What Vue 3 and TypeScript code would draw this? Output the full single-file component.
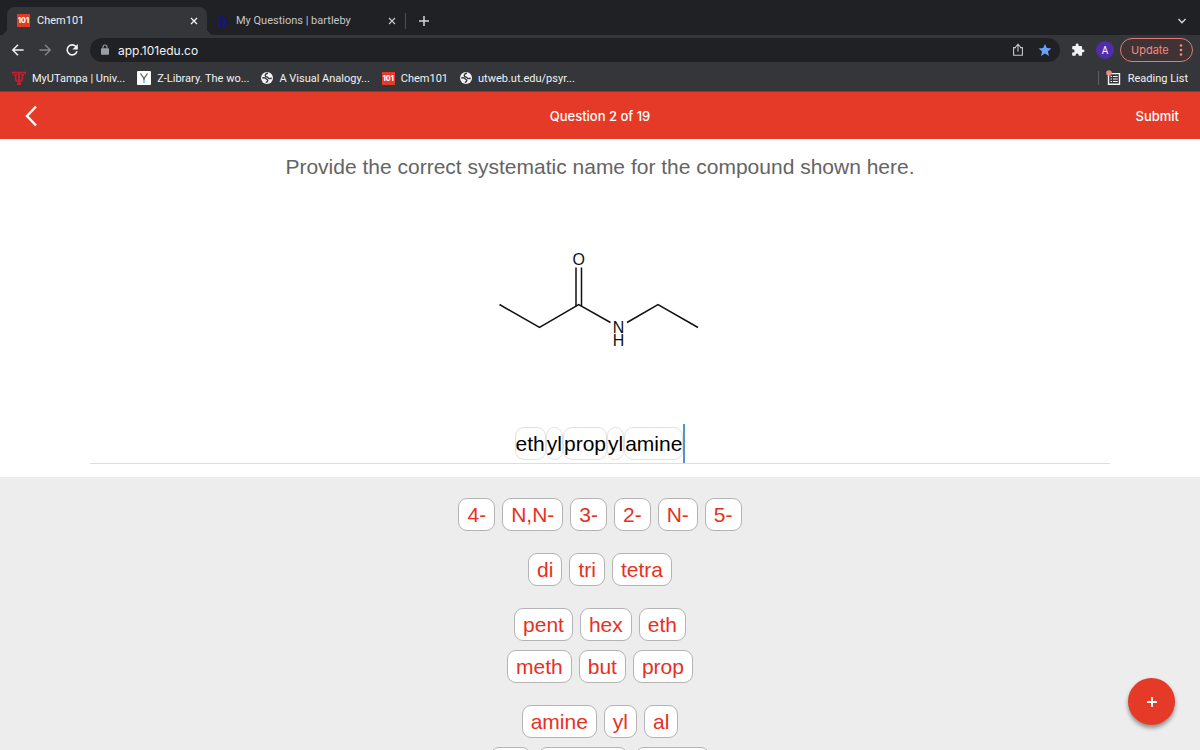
<script setup lang="ts">
import { ref } from 'vue'

interface Bookmark {
  label: string
  icon: 'ut' | 'y' | 'globe' | '101'
}

const bookmarks: Bookmark[] = [
  { label: 'MyUTampa | Univ...', icon: 'ut' },
  { label: 'Z-Library. The wo...', icon: 'y' },
  { label: 'A Visual Analogy...', icon: 'globe' },
  { label: 'Chem101', icon: '101' },
  { label: 'utweb.ut.edu/psyr...', icon: 'globe' },
]

const groups: string[][][] = [
  [['4-', 'N,N-', '3-', '2-', 'N-', '5-']],
  [['di', 'tri', 'tetra']],
  [
    ['pent', 'hex', 'eth'],
    ['meth', 'but', 'prop'],
  ],
  [
    ['amine', 'yl', 'al'],
    ['an', 'oic acid', 'amide'],
  ],
]

const address = ref('app.101edu.co')
const draft = ref('')
const answer = ref<string[]>(['eth', 'yl', 'prop', 'yl', 'amine'])

function add(part: string) {
  answer.value.push(part)
}
function removeLast() {
  if (!draft.value) answer.value.pop()
}
</script>

<template>
  <div class="window">
    <header class="browser">
      <div class="tabstrip">
        <div class="tab active">
          <span class="fav101">101</span>
          <span class="tabname">Chem101</span>
          <button class="icon close" aria-label="Close Chem101">
            <svg width="8" height="8" viewBox="0 0 8 8"><path d="M1 1l6 6M7 1l-6 6" stroke="#f1f3f4" stroke-width="1.3" /></svg>
          </button>
        </div>
        <div class="tab">
          <span class="favb">b</span>
          <span class="tabname">My Questions | bartleby</span>
          <button class="icon close" aria-label="Close My Questions">
            <svg width="8" height="8" viewBox="0 0 8 8"><path d="M1 1l6 6M7 1l-6 6" stroke="#c4c7cb" stroke-width="1.2" /></svg>
          </button>
        </div>
        <span class="tabsep"></span>
        <button class="icon newtab" aria-label="New tab">
          <svg width="12" height="12" viewBox="0 0 12 12"><path d="M6 1v10M1 6h10" stroke="#d5d7da" stroke-width="1.5" /></svg>
        </button>
        <button class="icon tabmenu" aria-label="Search tabs">
          <svg width="10" height="8" viewBox="0 0 10 8"><path d="M1.5 2L5 5.7 8.5 2" fill="none" stroke="#d5d7da" stroke-width="1.4" /></svg>
        </button>
      </div>

      <div class="toolbar">
        <div class="nav">
          <button class="icon" aria-label="Back">
            <svg width="14" height="14" viewBox="0 0 14 14"><path d="M12.6 7H2M7 1.8L1.8 7 7 12.2" fill="none" stroke="#f1f3f4" stroke-width="1.5" /></svg>
          </button>
          <button class="icon" aria-label="Forward">
            <svg width="14" height="14" viewBox="0 0 14 14"><path d="M1.4 7H12M7 1.8L12.2 7 7 12.2" fill="none" stroke="#85878b" stroke-width="1.4" /></svg>
          </button>
          <button class="icon" aria-label="Reload">
            <svg width="14" height="14" viewBox="0 0 14 14">
              <path d="M11.3 4A5 5 0 1 0 12 8.3" fill="none" stroke="#f1f3f4" stroke-width="1.6" />
              <path d="M12.8 1v5.4H7.4z" fill="#f1f3f4" />
            </svg>
          </button>
        </div>
        <div class="omnibox">
          <svg width="10" height="12" viewBox="0 0 10 12">
            <rect x="1" y="4.2" width="8" height="6.6" rx="0.8" fill="#9aa0a6" />
            <path d="M3 4.6V3a2 2 0 0 1 4 0v1.6" fill="none" stroke="#9aa0a6" stroke-width="1.1" />
          </svg>
          <input v-model="address" class="address" aria-label="Address" />
          <button class="icon" aria-label="Share">
            <svg width="12" height="14" viewBox="0 0 12 14"><path d="M4 4.6H1.6v7.6h8.8V4.6H8M6 8.800V1.600M3.600 3.800L6 1.400l2.400 2.400" fill="none" stroke="#c4c7cb" stroke-width="1.1" /></svg>
          </button>
          <button class="icon" aria-label="Bookmark">
            <svg width="14" height="14" viewBox="0 0 24 24"><path d="M12 1.5l3.1 7.2 7.9.7-6 5.2 1.8 7.7L12 18.200l-6.800 4.100L7 14.600 1 9.400l7.900-.7z" fill="#6aa0f8" /></svg>
          </button>
        </div>
        <button class="icon" aria-label="Extensions">
          <svg width="14" height="14" viewBox="0 0 24 24"><path d="M20.500 11H19V7a2 2 0 0 0-2-2h-4V3.500a2.500 2.500 0 0 0-5 0V5H4a2 2 0 0 0-2 2v3.800h1.500a2.700 2.700 0 0 1 0 5.400H2V20a2 2 0 0 0 2 2h3.800v-1.500a2.700 2.700 0 0 1 5.400 0V22H17a2 2 0 0 0 2-2v-4h1.500a2.500 2.500 0 0 0 0-5z" fill="#f1f3f4" /></svg>
        </button>
        <button class="avatar" aria-label="Profile">A</button>
        <button class="update">
          Update
          <svg width="4" height="14" viewBox="0 0 4 14" fill="#f08b82"><circle cx="2" cy="2.500" r="1.300" /><circle cx="2" cy="7" r="1.300" /><circle cx="2" cy="11.500" r="1.300" /></svg>
        </button>
      </div>

      <nav class="bookmarks" aria-label="Bookmarks">
        <a v-for="b in bookmarks" :key="b.label" href="#" class="bookmark">
          <span v-if="b.icon === '101'" class="fav101">101</span>
          <svg v-else-if="b.icon === 'ut'" width="14" height="14" viewBox="0 0 14 14" fill="none" stroke="#c5202f">
            <path d="M.5 3.600V1.500h13v2.100" stroke-width="1.400" />
            <path d="M7 1.500V12.500M5 12.800h4" stroke-width="2.200" />
            <path d="M3.600 3.500v4c0 2 1.200 3 3.400 3s3.400-1 3.400-3v-4M2 3.800h3M9 3.800h3" stroke-width="1.600" />
          </svg>
          <svg v-else-if="b.icon === 'y'" width="14" height="14" viewBox="0 0 14 14">
            <rect width="14" height="14" rx="1" fill="#fff" />
            <path d="M3.500 2.500L7 7.500l3.500-5" fill="none" stroke="#555" stroke-width="1.200" />
            <path d="M7 7.300V9" stroke="#555" stroke-width="1.300" /><path d="M7 9v3" stroke="#36a9e0" stroke-width="1.300" />
          </svg>
          <svg v-else width="12" height="12" viewBox="0 0 12 12">
            <circle cx="6" cy="6" r="6" fill="#f1f3f4" />
            <path d="M7 1.300C5 1.500 4 2.500 4.300 3.800S6.500 4.600 7 5.800 9 6.700 10.700 6.300M1.300 6c2-.4 3.500 0 4 1s1.700.5 1.500 1.700S5.500 10 5 10.600" fill="none" stroke="#35363a" stroke-width="1.400" />
          </svg>
          <span>{{ b.label }}</span>
        </a>
        <span class="marksep"></span>
        <button class="reading">
          <svg width="15" height="16" viewBox="0 0 15 16">
            <path d="M2.500 3.600h11v10.600h-11z" fill="none" stroke="#f1f3f4" stroke-width="1.400" />
            <path d="M4.500 6.500H6M4.500 9H6M4.500 11.500H6M7 6.500h4.700M7 9h4.700M7 11.500h4.700" stroke="#f1f3f4" stroke-width="1.200" />
            <circle cx="3" cy="3" r="2.800" fill="#f08b82" />
          </svg>
          Reading List
        </button>
      </nav>
    </header>

    <div class="appbar">
      <button class="icon back" aria-label="Previous">
        <svg width="12" height="22" viewBox="0 0 12 22"><path d="M11 1.500L2 11l9 9.500" fill="none" stroke="#fff" stroke-width="2.400" /></svg>
      </button>
      <span class="progress">Question 2 of 19</span>
      <button class="submit">Submit</button>
    </div>

    <main class="question">
      <h1>Provide the correct systematic name for the compound shown here.</h1>
      <svg class="molecule" width="240" height="130" viewBox="0 0 240 130" role="img" aria-label="N-ethylpropanamide">
        <g fill="none" stroke="#111" stroke-width="1.500">
          <path d="M19.500 74.500L59.500 97.500L98.700 74.500L130.500 92.500" />
          <path d="M96 76V37.500M101.500 76V37.500" />
          <path d="M147 92.500L178 74.500L218 97.500" />
        </g>
        <g class="atoms" text-anchor="middle">
          <text x="98.700" y="34.500">O</text>
          <text x="138.500" y="102.500">N</text>
          <text x="138.500" y="115.500">H</text>
        </g>
      </svg>
      <label class="answer">
        <span v-for="(part, i) in answer" :key="i" class="piece">{{ part }}</span>
        <input v-model="draft" class="caret" aria-label="Answer" @keydown.backspace="removeLast" />
      </label>
    </main>

    <section class="bank" aria-label="Name parts">
      <div v-for="(group, g) in groups" :key="g" class="group">
        <div v-for="(row, r) in group" :key="r" class="row">
          <button v-for="part in row" :key="part" class="chip" @click="add(part)">{{ part }}</button>
        </div>
      </div>
    </section>

    <button class="fab" aria-label="More">
      <svg width="12" height="12" viewBox="0 0 12 12"><path d="M6 1v10M1 6h10" stroke="#fff" stroke-width="1.800" /></svg>
    </button>
  </div>
</template>

<style>
body {
  margin: 0;
}
</style>

<style scoped>
.window {
  display: flex;
  flex-direction: column;
  height: 100vh;
  overflow: hidden;
  background: #fff;
  font-family: 'Liberation Sans', Arial, sans-serif;
}
button,
input {
  font: inherit;
  padding: 0;
  border: 0;
  background: none;
  color: inherit;
  outline: none;
}
button {
  cursor: pointer;
}
svg {
  display: block;
  flex: none;
}
.icon {
  display: flex;
  align-items: center;
  justify-content: center;
  flex: none;
}
.browser {
  background: #35363a;
  color: #f1f3f4;
  font-family: Roboto, 'Liberation Sans', sans-serif;
  font-size: 11px;
  font-weight: 400;
  border-bottom: 1px solid #5a4a48;
  flex: none;
}
.tabstrip {
  display: flex;
  align-items: center;
  height: 35px;
  padding: 0 13px 0 7px;
  background: #202124;
}
.tab {
  display: flex;
  align-items: center;
  box-sizing: border-box;
  width: 198px;
  height: 28px;
  margin-top: 7px;
  padding: 0 9px 1px 10px;
  gap: 7px;
  color: #c4c7cb;
}
.tab.active {
  position: relative;
  width: 200px;
  background: #35363a;
  border-radius: 8px 8px 0 0;
  color: #f1f3f4;
}
.tab.active::before,
.tab.active::after {
  content: '';
  position: absolute;
  bottom: 0;
  width: 7px;
  height: 7px;
}
.tab.active::before {
  left: -7px;
  background: radial-gradient(circle at 0 0, transparent 7px, #35363a 7px);
}
.tab.active::after {
  right: -7px;
  background: radial-gradient(circle at 100% 0, transparent 7px, #35363a 7px);
}
.tabname {
  flex: 1;
  white-space: nowrap;
}
.fav101 {
  width: 13px;
  height: 13px;
  line-height: 13px;
  background: #e53a28;
  color: #fff;
  font-family: Inter, 'Liberation Sans', sans-serif;
  font-size: 7px;
  font-weight: 800;
  text-align: center;
  flex: none;
}
.favb {
  width: 12px;
  color: #14148c;
  font-family: Inter, 'Liberation Sans', sans-serif;
  font-size: 16px;
  font-weight: 600;
  line-height: 16px;
  text-align: center;
}
.tabsep {
  width: 1px;
  height: 16px;
  margin-top: 6px;
  background: #4b4d51;
}
.newtab {
  margin: 6px 0 0 12px;
}
.tabmenu {
  margin: 6px 0 0 auto;
}
.toolbar {
  display: flex;
  align-items: center;
  height: 30px;
  padding: 0 7px 0 11px;
}
.nav {
  display: flex;
  gap: 13px;
  margin-right: 11px;
}
.omnibox {
  display: flex;
  align-items: center;
  flex: 1;
  height: 24px;
  margin-right: 11px;
  padding: 0 8px 0 10px;
  border-radius: 12px;
  background: #202124;
  gap: 14px;
}
.address {
  flex: 1;
  min-width: 0;
  margin-left: -6px;
  font-family: Inter, 'Liberation Sans', sans-serif;
  font-size: 12px;
}
.avatar {
  width: 18px;
  height: 18px;
  margin: 0 6px 0 11px;
  border-radius: 50%;
  background: #512da8;
  color: #fff;
  font-size: 10px;
}
.update {
  display: flex;
  align-items: center;
  justify-content: space-between;
  box-sizing: border-box;
  width: 73px;
  height: 24px;
  padding: 0 9px 0 10px;
  border: 1px solid #dd7d76;
  border-radius: 12px;
  background: #3f3335;
  color: #f08b82;
  font-family: Inter, 'Liberation Sans', sans-serif;
}
.bookmarks {
  display: flex;
  align-items: center;
  height: 26px;
  padding: 0 12px;
}
.bookmark {
  display: flex;
  align-items: center;
  gap: 6px;
  margin-right: 12px;
  color: inherit;
  text-decoration: none;
  white-space: nowrap;
}
.marksep {
  width: 1px;
  height: 14px;
  margin: 0 7px 0 auto;
  background: #5f6165;
}
.reading {
  display: flex;
  align-items: center;
  gap: 7px;
  white-space: nowrap;
}
.appbar {
  display: grid;
  grid-template-columns: 1fr auto 1fr;
  align-items: center;
  height: 47px;
  padding: 0 21px;
  background: #e53a28;
  color: #fff;
  font-family: Inter, 'Liberation Sans', sans-serif;
  font-size: 13px;
  font-weight: 500;
  flex: none;
}
.back {
  justify-self: start;
  padding-left: 4px;
}
.submit {
  justify-self: end;
}
.question {
  display: flex;
  flex-direction: column;
  align-items: center;
  padding: 14px 0 13px;
  flex: none;
}
h1 {
  margin: 0;
  color: #646464;
  font-size: 21px;
  font-weight: 400;
  line-height: 28px;
}
.molecule {
  margin: 49px 0 64px;
}
.atoms {
  fill: #111;
  font-size: 16px;
}
.answer {
  display: flex;
  align-items: center;
  justify-content: center;
  width: 85%;
  height: 39px;
  border-bottom: 1px solid #dedede;
  color: #000;
  font-size: 21px;
}
.piece {
  border: 1px solid #e2e2e2;
  border-radius: 9px;
  line-height: 31px;
}
.caret {
  width: 2px;
  height: 39px;
  background: #5595c5;
}
.bank {
  display: flex;
  flex-direction: column;
  flex: 1;
  gap: 22px;
  min-height: 0;
  padding-top: 21px;
  background: #ededed;
}
.group {
  display: flex;
  flex-direction: column;
  gap: 9px;
  flex: none;
}
.row {
  display: flex;
  justify-content: center;
  gap: 7px;
}
.chip {
  padding: 0 8px;
  border: 1px solid #b4b4b4;
  border-radius: 9px;
  background: #fff;
  color: #e8301f;
  font-size: 21px;
  line-height: 31px;
}
.fab {
  display: flex;
  align-items: center;
  justify-content: center;
  position: fixed;
  right: 25px;
  bottom: 25px;
  width: 47px;
  height: 47px;
  border-radius: 50%;
  background: #e53a28;
  box-shadow: 0 3px 4px rgba(0, 0, 0, 0.4);
}
</style>
